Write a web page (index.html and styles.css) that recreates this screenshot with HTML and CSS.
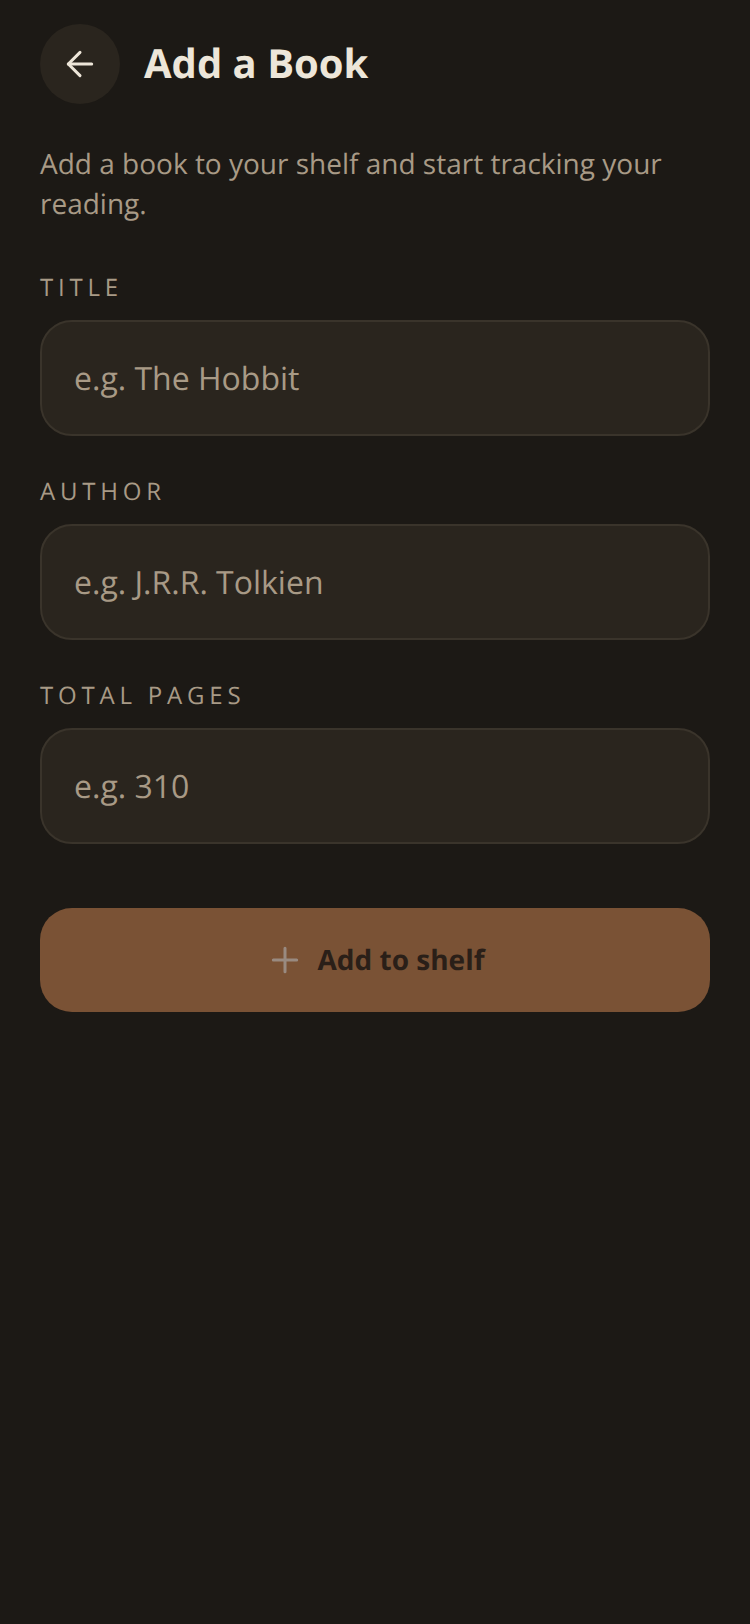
FILE: index.html
```html
<!DOCTYPE html>
<html lang="en">
<head>
<meta charset="utf-8">
<title>Add a Book</title>
<link rel="stylesheet" href="styles.css">
</head>
<body>
<main class="page">
  <header class="header">
    <button class="back" type="button" aria-label="Back">
      <svg class="icon" viewBox="0 0 24 24" fill="none" stroke="currentColor" stroke-width="1.8" stroke-linecap="round" stroke-linejoin="round"><path d="M19 12H5"/><path d="M12 19l-7-7 7-7"/></svg>
    </button>
    <h1 class="title">Add a Book</h1>
  </header>
  <p class="intro">Add a book to your shelf and start tracking your reading.</p>
  <form class="form">
    <div class="field">
      <label class="label" for="t">TITLE</label>
      <input class="input" id="t" type="text" placeholder="e.g. The Hobbit">
    </div>
    <div class="field">
      <label class="label" for="a">AUTHOR</label>
      <input class="input" id="a" type="text" placeholder="e.g. J.R.R. Tolkien">
    </div>
    <div class="field">
      <label class="label" for="p">TOTAL PAGES</label>
      <input class="input" id="p" type="text" placeholder="e.g. 310">
    </div>
    <button class="submit" type="button">
      <svg class="icon plus" viewBox="0 0 24 24" fill="none" stroke="currentColor" stroke-width="1.8" stroke-linecap="round"><path d="M12 5v14M5 12h14"/></svg>
      <span>Add to shelf</span>
    </button>
  </form>
</main>
</body>
</html>
```
FILE: styles.css
```css
* { box-sizing: border-box; }
html, body { margin: 0; padding: 0; }
body {
  min-height: 1624px;
  background: #1c1915;
  font-family: "Open Sans", sans-serif;
  text-rendering: geometricPrecision;
}
.page { padding: 24px 40px 0; }
.header { display: flex; align-items: center; gap: 24px; }
.back {
  width: 80px; height: 80px; border: 0; border-radius: 50%;
  background: #2a251e; color: #ede6d9; padding: 0;
  display: flex; align-items: center; justify-content: center;
}
.icon { width: 40px; height: 40px; display: block; flex: none; }
.title { margin: 0 0 2px; font-size: 40px; line-height: 54px; font-weight: 700; color: #ede6d9; text-rendering: geometricPrecision; }
.intro { margin: 40px 0 0; font-size: 28px; line-height: 40px; color: #a89a86; }
.form { display: flex; flex-direction: column; margin-top: 48px; }
.field { display: flex; flex-direction: column; gap: 16px; margin-bottom: 40px; }
.label { font-size: 24px; line-height: 32px; letter-spacing: 4.8px; color: #a89a86; }
.input {
  width: 100%; height: 116px; padding: 0 32px;
  background: #2a251e; border: 2px solid #3a342b; border-radius: 32px;
  font: 400 32px "Open Sans", sans-serif; color: #ede6d9; outline: 0;
  text-rendering: geometricPrecision;
}
.input::placeholder { color: #a89a86; opacity: 1; }
.submit {
  height: 104px; margin-top: 24px; border: 0; border-radius: 32px;
  background: #7a5235; color: #2a1f18;
  display: flex; align-items: center; justify-content: center; gap: 12px;
  font: 700 28px "Open Sans", sans-serif;
  text-rendering: geometricPrecision;
}
.plus { color: #998a80; }
```
